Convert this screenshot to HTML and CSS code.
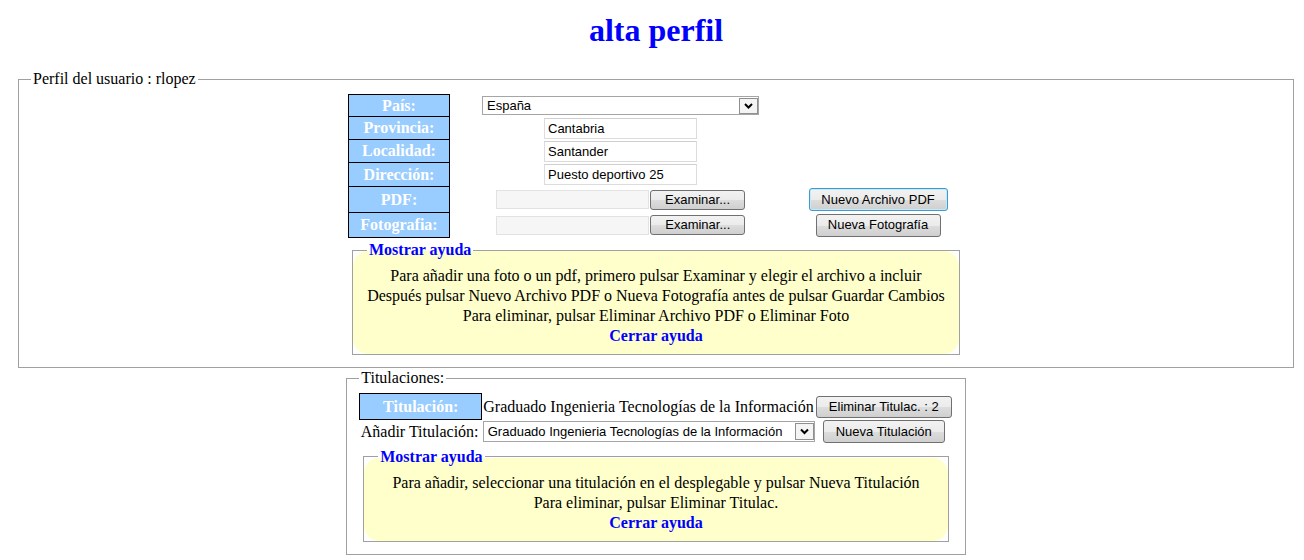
FILE: index.html
```html
<!DOCTYPE html>
<html lang="es">
<head>
<meta charset="utf-8">
<title>alta perfil</title>
<link rel="stylesheet" href="styles.css">
</head>
<body>
<h1 class="title">alta perfil</h1>

<fieldset class="box perfil">
  <legend class="box-legend">Perfil del usuario : rlopez</legend>
  <div class="wrap">
    <table class="datos">
      <colgroup><col class="c1"><col class="c2"><col class="c3"></colgroup>
      <tr class="h22">
        <th class="lbl">País:</th>
        <td class="mid">
          <span class="sel sel-pais">
            <select class="select"><option>España</option></select>
            <svg class="arrow" width="19" height="16" viewBox="0 0 19 16"><rect x="0.5" y="0.5" width="18" height="15" fill="#f4f4f4" stroke="#8e8f8f"/><path d="M6 6 L9.5 9.5 L13 6" fill="none" stroke="#000" stroke-width="2"/></svg>
          </span>
        </td>
        <td class="mid"></td>
      </tr>
      <tr class="h23">
        <th class="lbl">Provincia:</th>
        <td class="mid"><input class="txt" type="text" value="Cantabria"></td>
        <td class="mid"></td>
      </tr>
      <tr class="h23">
        <th class="lbl">Localidad:</th>
        <td class="mid"><input class="txt" type="text" value="Santander"></td>
        <td class="mid"></td>
      </tr>
      <tr class="h24">
        <th class="lbl">Dirección:</th>
        <td class="mid"><input class="txt" type="text" value="Puesto deportivo 25"></td>
        <td class="mid"></td>
      </tr>
      <tr class="h26">
        <th class="lbl">PDF:</th>
        <td class="mid"><span class="file"><span class="file-field"></span><button class="btn btn-exam" type="button">Examinar...</button></span></td>
        <td class="mid"><button class="btn btn-focus btn-pdf" type="button">Nuevo Archivo PDF</button></td>
      </tr>
      <tr class="h25">
        <th class="lbl">Fotografia:</th>
        <td class="mid"><span class="file"><span class="file-field"></span><button class="btn btn-exam" type="button">Examinar...</button></span></td>
        <td class="mid"><button class="btn btn-foto" type="button">Nueva Fotografía</button></td>
      </tr>
    </table>

    <fieldset class="ayuda">
      <legend class="ayuda-legend">Mostrar ayuda</legend>
      <div class="ayuda-body">
        <div>Para añadir una foto o un pdf, primero pulsar Examinar y elegir el archivo a incluir</div>
        <div>Después pulsar Nuevo Archivo PDF o Nueva Fotografía antes de pulsar Guardar Cambios</div>
        <div>Para eliminar, pulsar Eliminar Archivo PDF o Eliminar Foto</div>
        <div><a class="cerrar" href="#">Cerrar ayuda</a></div>
      </div>
    </fieldset>
  </div>
</fieldset>

<fieldset class="box titul">
  <legend class="box-legend">Titulaciones:</legend>
  <table class="tit">
    <colgroup><col class="t1"><col class="t2"><col class="t3"></colgroup>
    <tr class="h26">
      <th class="lbl">Titulación:</th>
      <td class="tit-name">Graduado Ingenieria Tecnologías de la Información</td>
      <td class="mid"><button class="btn btn-elim" type="button">Eliminar Titulac. : 2</button></td>
    </tr>
    <tr class="h24">
      <td class="add-lbl">Añadir Titulación:</td>
      <td class="tit-sel">
        <span class="sel sel-tit">
          <select class="select"><option>Graduado Ingenieria Tecnologías de la Información</option></select>
          <svg class="arrow" width="19" height="17" viewBox="0 0 19 17"><rect x="0.5" y="0.5" width="18" height="16" fill="#f4f4f4" stroke="#8e8f8f"/><path d="M6 6.5 L9.5 10 L13 6.5" fill="none" stroke="#000" stroke-width="2"/></svg>
        </span>
      </td>
      <td class="mid"><button class="btn btn-nueva" type="button">Nueva Titulación</button></td>
    </tr>
  </table>

  <fieldset class="ayuda">
    <legend class="ayuda-legend">Mostrar ayuda</legend>
    <div class="ayuda-body">
      <div>Para añadir, seleccionar una titulación en el desplegable y pulsar Nueva Titulación</div>
      <div>Para eliminar, pulsar Eliminar Titulac.</div>
      <div><a class="cerrar" href="#">Cerrar ayuda</a></div>
    </div>
  </fieldset>
</fieldset>
</body>
</html>
```

FILE: styles.css
```css
html, body {
  background: #ffffff;
}
body {
  margin: 8px 0 0 8px;
  font-family: "Liberation Serif", "Times New Roman", serif;
  font-size: 16px;
  color: #000;
}
.title {
  margin: 4px 0 21px;
  font-size: 32px;
  line-height: 37px;
  font-weight: bold;
  color: #0000ff;
  text-align: center;
}
.box {
  border: 1px solid #a0a0a0;
  padding: 6px 12px 12px;
  margin: 0;
  min-width: 0;
}
.perfil {
  margin: 0 10px;
}
.titul {
  width: fit-content;
  margin: 1px auto 0;
}
.box-legend {
  padding: 0 2px;
  line-height: 18px;
  font-size: 16px;
}
.wrap {
  width: 616px;
  margin: 0 auto;
}
.datos, .tit {
  border-collapse: collapse;
  table-layout: fixed;
}
.datos { width: 616px; }
.tit { width: 593px; }
.c1 { width: 101px; }
.c2 { width: 342px; }
.c3 { width: 173px; }
.t1 { width: 122px; }
.t2 { width: 333px; }
.t3 { width: 138px; }
.h22 { height: 22px; }
.h23 { height: 23px; }
.h24 { height: 24px; }
.h25 { height: 25px; }
.h26 { height: 26px; }
th, td {
  padding: 0 1px;
  vertical-align: middle;
}
.lbl {
  background: #99ccff;
  color: #ffffff;
  border: 1px solid #000;
  font-weight: bold;
  font-size: 16px;
  text-align: center;
  white-space: nowrap;
  line-height: 18px;
}
.mid {
  text-align: center;
  font-family: "Liberation Sans", Arial, sans-serif;
  font-size: 13px;
  line-height: 0;
}
.sel {
  position: relative;
  display: inline-block;
  vertical-align: middle;
  line-height: 0;
}
.select {
  -webkit-appearance: none;
  appearance: none;
  margin: 0;
  border: 1px solid #a5a5a5;
  border-radius: 0;
  background: #fff;
  font-family: "Liberation Sans", Arial, sans-serif;
  font-size: 13px;
  color: #000;
  padding: 0 0 0 4px;
  box-sizing: border-box;
  outline: none;
}
.sel-pais .select {
  width: 277px;
  height: 19px;
  line-height: 17px;
}
.sel-pais .arrow {
  position: absolute;
  right: 1px;
  top: 2px;
}
.sel-tit .select {
  width: 332px;
  height: 21px;
  line-height: 19px;
  padding-left: 4px;
}
.sel-tit .arrow {
  position: absolute;
  right: 1px;
  top: 2px;
}
.txt {
  box-sizing: border-box;
  width: 153px;
  height: 21px;
  margin: 0;
  border: 1px solid #dcdcdc;
  border-top-color: #cfcfcf;
  padding: 0 3px;
  font-family: "Liberation Sans", Arial, sans-serif;
  font-size: 13px;
  color: #000;
  vertical-align: middle;
  outline: none;
}
.file {
  display: inline-flex;
  align-items: center;
  gap: 1px;
  vertical-align: middle;
}
.file-field {
  display: block;
  box-sizing: border-box;
  width: 153px;
  height: 19px;
  border: 1px solid #e2e2e2;
  background: #f6f6f6;
}
.btn {
  box-sizing: border-box;
  height: 22px;
  margin: 0;
  padding: 0 10px;
  border: 1px solid #707070;
  border-radius: 3px;
  background: linear-gradient(#f2f2f2 0%, #ebebeb 50%, #dddddd 51%, #cfcfcf 100%);
  font-family: "Liberation Sans", Arial, sans-serif;
  font-size: 13px;
  color: #000;
  vertical-align: middle;
  white-space: nowrap;
  line-height: 20px;
}
.btn-exam {
  width: 95px;
  height: 20px;
  line-height: 18px;
  padding: 0;
}
.btn-focus {
  border-color: #3c9bd0;
  box-shadow: inset 0 0 0 1px #c6e9f9;
}
.btn-pdf { width: 139px; height: 23px; padding: 0; }
.btn-foto { width: 125px; height: 23px; padding: 0; }
.btn-elim { width: 136px; padding: 0; }
.btn-nueva { width: 122px; height: 23px; padding: 0; }
.tit-name {
  white-space: nowrap;
  font-size: 16px;
}
.add-lbl {
  white-space: nowrap;
  font-size: 16px;
}
.tit-sel {
  line-height: 0;
}
.ayuda {
  margin: 3px 4px 0;
  padding: 0;
  border: 1px solid #a0a0a0;
  min-width: 0;
}
.ayuda-legend {
  margin-left: 14px;
  padding: 0 2px;
  color: #0000ff;
  font-weight: bold;
  font-size: 16px;
  line-height: 18px;
}
.ayuda-body {
  margin-top: -8px;
  padding: 15px 0 8px;
  background: #ffffcc;
  border-radius: 15px;
  text-align: center;
  line-height: 20px;
}
.cerrar {
  color: #0000ff;
  font-weight: bold;
  text-decoration: none;
}
.titul .ayuda {
  margin-top: 4px;
}
```
